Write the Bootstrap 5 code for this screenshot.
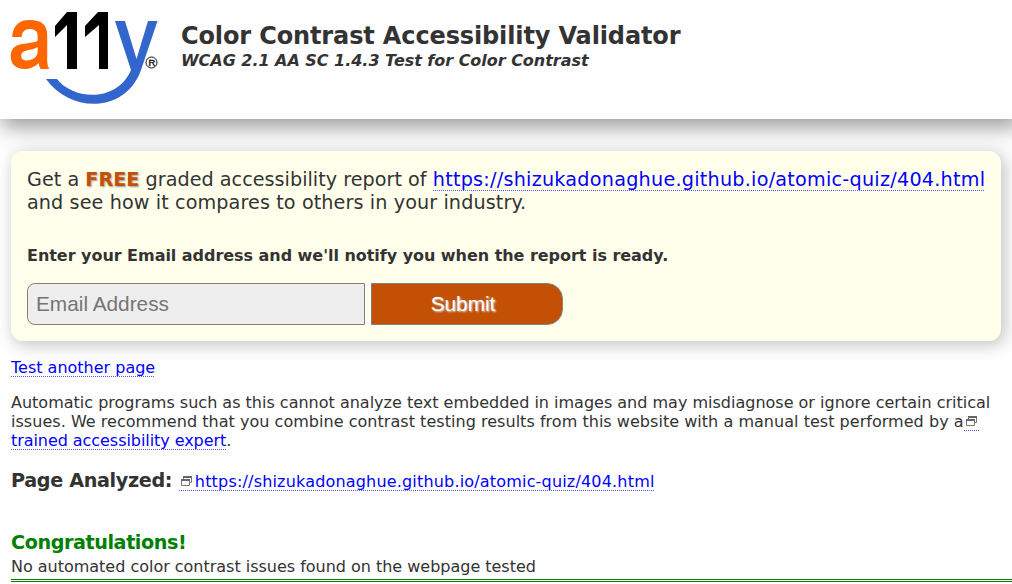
<!DOCTYPE html>
<html lang="en">
<head>
<meta charset="utf-8">
<meta name="viewport" content="width=device-width, initial-scale=1">
<title>Color Contrast Accessibility Validator</title>
<link href="https://cdn.jsdelivr.net/npm/bootstrap@5.3.0/dist/css/bootstrap.min.css" rel="stylesheet">
<style>
body{font-family:Verdana,"DejaVu Sans",sans-serif;font-size:16px;line-height:19px;color:#333;background:#fefefe;overflow:hidden;white-space:nowrap}
a{color:#00f;text-decoration:none;background:repeating-linear-gradient(90deg,#55d 0 1px,transparent 1px 2px) 0 100%/100% 1px no-repeat}
.site-header{height:119px;background:#fefefe;box-shadow:5px 5px 20px 3px #999;padding:10px 0 0 9px}
.site-heading{margin-left:20px}
.site-title{font-size:24px;line-height:30px;margin:11px 0 0;font-weight:700;letter-spacing:-.13px}
.site-sub{font-size:16px;line-height:19px;font-weight:700;font-style:italic;letter-spacing:-.03px}
.report{margin:32px 11px 0;height:190px;padding:17px 16px 0;background:#ffffec;border-radius:12px;box-shadow:3px 3px 16px 1px #c4c4c4;position:relative}
.report-lead{font-size:19.2px;line-height:23px;margin:0;letter-spacing:.02px}
.report-lead a{letter-spacing:.24px}
.report-tail{letter-spacing:.1px}
.free{color:#c35004;text-shadow:1px 1px 2px #999}
.prompt{font-size:16px;line-height:20px;margin:32px 0 17px;font-weight:700;letter-spacing:-.04px}
.email,.send{height:42px;border:1px solid #808080;font:20.8px/40px "Liberation Sans",Arial,sans-serif}
.email{width:338px;border-radius:8px 0 0 8px;background:#eee;padding:0 8px}
.email::placeholder{color:#757575;opacity:1}
.send{width:192px;margin-left:6px;border-radius:0 16px 16px 0;background:#c35004;color:#fff;text-shadow:1px 1px 2px #ddd;padding:0 8px 0 0}
.results{padding-left:11px}
.results p{margin:0}
.results .again{margin-top:17px}
.results .note{margin-top:16px}
.note-mid{letter-spacing:.035px}
.expert{letter-spacing:-.06px}
.h-page,.h-ok{font-size:19.2px;font-weight:700;line-height:24px}
.h-page span{letter-spacing:-.35px}
.results .h-page{margin-top:19px}
.h-page a{font-size:16px;font-weight:400;letter-spacing:.18px}
.results .h-ok{color:green;margin-top:37px;letter-spacing:-.43px}
.results .verdict{border-bottom:3px double green;padding:2px 0 3px;letter-spacing:-.015px}
.ext{width:16px;height:12px;vertical-align:0}
</style>
</head>
<body>
<svg class="d-none">
<symbol id="newwin" viewBox="0 0 16 12"><g fill="none" stroke="#777"><path d="M4.500 4V1.500H12.500V7.500H10.500"/><path d="M2.500 4.500H10.500V10.500H2.500Z"/></g><path d="M4 1H13V3H4ZM2 4H11V6H2Z" fill="#666"/></symbol>
</svg>
<header class="site-header d-flex">
<svg width="152" height="96" viewBox="9 10 152 96" role="img" aria-label="a11y">
<path transform="translate(.7 0)" fill="#f60" fill-rule="evenodd" d="M11.500 37C12 26 18 20 29 20C41 20 46.500 25 46.500 35V61Q46.500 66 48.500 69H40Q38 66 38 63C34 67 29 69 24 69C15 69 10 64 10 56C10 49 14 45 22 44C32 42.500 37 42 37 40V36C37 31 34 29 29 29C24 29 21 32 21 37ZM37 47C34 49 30 49.500 26 50.500C22 51.500 20.500 53 20.500 56C20.500 59 23 60.500 26 60.500C32 60.500 37 57 37 51Z"/>
<path d="M55 26L67 12H77V69H67V25L55 37ZM85 26L98 12H108V69H99V25L85 37Z"/>
<path d="M115 21H125L136.500 59L148 21H157.500L141 70C126 113 71 114 46 79H57C73 100 117 103 131 70Z" fill="#36c"/>
<circle cx="151.500" cy="62.500" r="5.500" fill="none" stroke="#111"/>
<text x="148.400" y="66" font-family="Liberation Sans" font-size="9.500" stroke="#000" stroke-width=".3">R</text>
</svg>
<div class="site-heading">
<h1 class="site-title">Color Contrast Accessibility Validator</h1>
<div class="site-sub">WCAG 2.1 AA SC 1.4.3 Test for Color Contrast</div>
</div>
</header>
<main>
<section class="report">
<p class="report-lead">Get a <b class="free">FREE</b> graded accessibility report of <a href="#">https://shizukadonaghue.github.io/atomic-quiz/404.html</a><br><span class="report-tail">and see how it compares to others in your industry.</span></p>
<p class="prompt">Enter your Email address and we'll notify you when the report is ready.</p>
<form class="d-flex"><input class="email" placeholder="Email Address" aria-label="Email Address"><button type="button" class="send">Submit</button></form>
</section>
<section class="results">
<p class="again"><a href="#">Test another page</a></p>
<p class="note">Automatic programs such as this cannot analyze text embedded in images and may misdiagnose or ignore certain critical<br><span class="note-mid">issues. We recommend that you combine contrast testing results from this website with a manual test performed by a</span><a href="#"><svg class="ext"><use href="#newwin"/></svg><br><span class="expert">trained accessibility expert</span></a>.</p>
<p class="h-page"><span>Page Analyzed:</span> <a href="#"><svg class="ext"><use href="#newwin"/></svg>https://shizukadonaghue.github.io/atomic-quiz/404.html</a></p>
<p class="h-ok">Congratulations!</p>
<p class="verdict">No automated color contrast issues found on the webpage tested</p>
</section>
</main>
</body>
</html>
